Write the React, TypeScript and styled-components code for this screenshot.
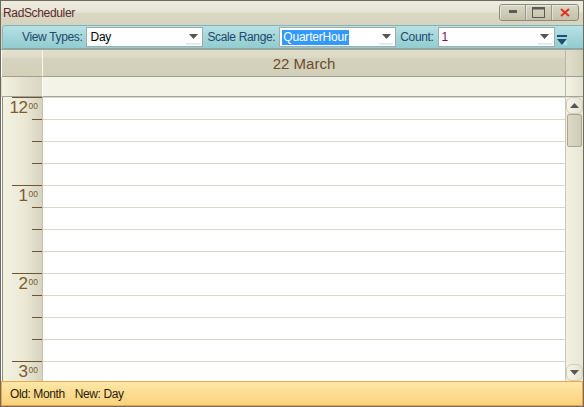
import React from "react";
import styled, { createGlobalStyle } from "styled-components";

const Global = createGlobalStyle`
  html, body { margin: 0; padding: 0; background: #ffffff; }
  body { font-family: "Liberation Sans", Arial, sans-serif; }
  * { box-sizing: border-box; }
`;

const Window = styled.div`
  width: 584px;
  height: 407px;
  border: 1px solid #6d6b60;
  display: flex;
  flex-direction: column;
  background: #d8d5c2;
  overflow: hidden;
`;

const TitleBar = styled.div`
  height: 24px;
  flex: none;
  display: flex;
  align-items: center;
  justify-content: space-between;
  padding: 0 4px 0 2px;
  background: linear-gradient(#eeecdf 0%, #e7e5d5 45%, #dad7c4 52%, #d6d3be 100%);
`;

const Title = styled.span`
  font-size: 12px;
  color: #5b2a2a;
  letter-spacing: -0.35px;
`;

const WinButtons = styled.div`
  display: flex;
  height: 17px;
  margin-top: -2px;
  border: 1px solid #8c8a79;
  border-radius: 3px;
  overflow: hidden;
  background: linear-gradient(#d9d7c5, #c3c0ab);
`;

const WinButton = styled.div<{ $last?: boolean }>`
  width: 26px;
  height: 100%;
  display: flex;
  align-items: center;
  justify-content: center;
  border-right: ${(p) => (p.$last ? "none" : "1px solid #9a988a")};
  box-shadow: inset 1px 1px 0 rgba(255, 255, 255, 0.45);
`;

const Toolbar = styled.div`
  height: 24px;
  flex: none;
  margin: 0 0 0 1px;
  display: flex;
  align-items: center;
  padding: 0 0 0 19px;
  border-top: 1px solid #7fb4b8;
  border-bottom: 1px solid #7fa9ac;
  border-left: 1px solid #86b9bc;
  border-radius: 4px 0 0 0;
  background: linear-gradient(#b8e2e5 0%, #a3d6da 50%, #92ccd0 100%);
`;

const Label = styled.span`
  font-size: 12px;
  color: #1f4a6b;
  margin-right: 4px;
  letter-spacing: -0.35px;
  white-space: nowrap;
`;

const Combo = styled.div<{ $w: number }>`
  width: ${(p) => p.$w}px;
  height: 20px;
  background: #ffffff;
  border: 1px solid #a4a9a9;
  display: flex;
  align-items: center;
  padding-left: 2px;
  margin-right: 4px;
  position: relative;
  font-size: 12px;
  letter-spacing: -0.2px;
  color: #000;
`;

const ComboText = styled.span<{ $sel?: boolean; $color?: string }>`
  background: ${(p) => (p.$sel ? "#3399ff" : "transparent")};
  color: ${(p) => (p.$sel ? "#ffffff" : p.$color || "#000")};
  padding: 0 1px;
  line-height: 15px;
`;

const Arrow = styled.div`
  position: absolute;
  right: 2px;
  top: 1px;
  bottom: 1px;
  width: 14px;
  display: flex;
  align-items: center;
  justify-content: center;
  border-bottom: 2px solid #e3ecec;
`;

const Header = styled.div`
  height: 28px;
  flex: none;
  display: flex;
  background: #ffffff;
  border-top: 1px solid #a5a392;
`;

const Corner = styled.div`
  width: 41px;
  flex: none;
  margin-left: 1px;
  border-right: 1px solid #f7f6ee;
  border-bottom: 1px solid #a09e8c;
  background: linear-gradient(#e3e1cf 0%, #dedbc7 30%, #d6d3be 31%, #d4d1bb 100%);
`;

const DateHead = styled.div`
  flex: 1;
  display: flex;
  align-items: center;
  justify-content: center;
  font-size: 15px;
  color: #6b4c2c;
  padding-top: 1px;
  border-bottom: 1px solid #a09e8c;
  background: linear-gradient(#e0ddca 0%, #dcd9c5 30%, #d5d2bc 31%, #d3d0ba 100%);
`;

const SideCap = styled.div<{ $light?: boolean }>`
  width: 18px;
  flex: none;
  border-left: 1px solid #b8b6a5;
  border-bottom: 1px solid ${(p) => (p.$light ? "#a6a496" : "#a09e8c")};
  background: ${(p) => (p.$light ? "linear-gradient(90deg, #f4f3e6, #e4e2d0)" : "linear-gradient(90deg, #e0ddca, #d3d0ba)")};
`;

const AllDayRow = styled.div`
  height: 20px;
  flex: none;
  display: flex;
`;

const AllDayCorner = styled.div`
  width: 41px;
  flex: none;
  margin-left: 1px;
  border-right: 1px solid #ffffff;
  border-bottom: 1px solid #a6a496;
  background: linear-gradient(90deg, #f2f0df, #d9d6c2);
`;

const AllDayCell = styled.div`
  flex: 1;
  background: #f4f3e7;
  border-bottom: 1px solid #a6a496;
`;

const Body = styled.div`
  flex: 1;
  display: flex;
  min-height: 0;
  overflow: hidden;
  background: #ffffff;
`;

const Ruler = styled.div`
  width: 41px;
  flex: none;
  margin-left: 1px;
  border-left: 1px solid #8f8d7e;
  border-right: 1px solid #c4c1ac;
  background: linear-gradient(90deg, #f3f1e0 0%, #ebe9d6 55%, #d6d3bf 100%);
  overflow: hidden;
`;

const HourSlot = styled.div`
  height: 88px;
  position: relative;
  display: grid;
  grid-template-rows: repeat(4, 22px);
`;

const HourLine = styled.div`
  position: absolute;
  top: 0;
  left: 9px;
  right: 0;
  height: 1px;
  background: #6f5433;
`;

const Tick = styled.div<{ $first?: boolean }>`
  border-top: 1px solid ${(p) => (p.$first ? "transparent" : "#6f5433")};
  margin-left: 29px;
`;

const HourLabel = styled.div`
  position: absolute;
  top: 2px;
  right: 4px;
  display: flex;
  align-items: flex-start;
  color: #7c5a30;
  font-family: "Liberation Sans", Arial, sans-serif;
`;

const HourBig = styled.span`
  font-size: 17px;
  line-height: 17px;
  letter-spacing: -0.5px;
`;

const HourSmall = styled.span`
  font-size: 8.5px;
  line-height: 10px;
  margin-left: 1px;
  margin-top: 2px;
`;

const Cells = styled.div`
  flex: 1;
  overflow: hidden;
`;

const Cell = styled.div`
  height: 22px;
  border-top: 1px solid #d8d7cc;
`;

const Scrollbar = styled.div`
  width: 18px;
  flex: none;
  display: flex;
  flex-direction: column;
  border-left: 1px solid #c9c7b6;
  background: linear-gradient(90deg, #f1f0e2, #e9e7d6);
`;

const ScrollBtn = styled.div`
  height: 17px;
  display: flex;
  align-items: center;
  justify-content: center;
  border: 1px solid #cfcdbb;
  border-radius: 6px;
  background: linear-gradient(90deg, #f6f5ea, #e4e2cf);
`;

const Thumb = styled.div`
  height: 33px;
  margin: 0 1px;
  border: 1px solid #a9a792;
  border-radius: 2px;
  background: linear-gradient(90deg, #dcdac6, #ceccb5);
`;

const Track = styled.div`
  flex: 1;
`;

const StatusBar = styled.div`
  height: 25px;
  flex: none;
  display: flex;
  align-items: center;
  padding-left: 8px;
  border: 1px solid #eea64a;
  background: linear-gradient(#fde7a6, #fbd27e);
  font-size: 12px;
  letter-spacing: -0.4px;
  color: #2a1a0a;
`;

const Gap = styled.span`
  display: inline-block;
  width: 10px;
`;

const DownTri = ({ color = "#555" }: { color?: string }) => (
  <svg width="9" height="5" viewBox="0 0 9 5">
    <path d="M0 0 H9 L4.5 5 Z" fill={color} />
  </svg>
);

const hours = ["12", "1", "2", "3"];

export default function App() {
  const rows = Array.from({ length: 14 });
  return (
    <>
      <Global />
      <Window>
        <TitleBar>
          <Title>RadScheduler</Title>
          <WinButtons>
            <WinButton>
              <svg width="10" height="4" viewBox="0 0 10 4">
                <rect x="1" y="0" width="8" height="3" fill="#5d5b50" />
              </svg>
            </WinButton>
            <WinButton>
              <svg width="13" height="11" viewBox="0 0 13 11">
                <rect x="0.5" y="0.5" width="12" height="10" fill="none" stroke="#5d5b50" />
                <rect x="0.5" y="0.5" width="12" height="2" fill="#5d5b50" />
              </svg>
            </WinButton>
            <WinButton $last>
              <svg width="10" height="9" viewBox="0 0 10 9">
                <path d="M1 1 L9 8 M9 1 L1 8" stroke="#e0321c" strokeWidth="2" />
              </svg>
            </WinButton>
          </WinButtons>
        </TitleBar>
        <Toolbar>
          <Label>View Types:</Label>
          <Combo $w={117}>
            <ComboText>Day</ComboText>
            <Arrow>
              <DownTri />
            </Arrow>
          </Combo>
          <Label>Scale Range:</Label>
          <Combo $w={117}>
            <ComboText $sel>QuarterHour</ComboText>
            <Arrow>
              <DownTri />
            </Arrow>
          </Combo>
          <Label>Count:</Label>
          <Combo $w={117}>
            <ComboText $color="#6a1450">1</ComboText>
            <Arrow>
              <DownTri />
            </Arrow>
          </Combo>
          <svg width="11" height="12" viewBox="0 0 11 12" style={{ marginTop: 8, marginLeft: -2 }}>
            <rect x="0" y="0" width="10" height="2" fill="#1d4e73" />
            <path d="M0 4 H10 L5 10 Z" fill="#1d4e73" />
            <path d="M5 10 L10 4 V10 Z" fill="#cfe9ec" opacity="0.6" />
          </svg>
        </Toolbar>
        <Header>
          <Corner />
          <DateHead>22 March</DateHead>
          <SideCap />
        </Header>
        <AllDayRow>
          <AllDayCorner />
          <AllDayCell />
          <SideCap $light />
        </AllDayRow>
        <Body>
          <Ruler>
            {hours.map((h) => (
              <HourSlot key={h}>
                <HourLine />
                <HourLabel>
                  <HourBig>{h}</HourBig>
                  <HourSmall>00</HourSmall>
                </HourLabel>
                <Tick $first />
                <Tick />
                <Tick />
                <Tick />
              </HourSlot>
            ))}
          </Ruler>
          <Cells>
            {rows.map((_, i) => (
              <Cell key={i} />
            ))}
          </Cells>
          <Scrollbar>
            <ScrollBtn>
              <svg width="9" height="5" viewBox="0 0 9 5">
                <path d="M0 5 H9 L4.5 0 Z" fill="#555" />
              </svg>
            </ScrollBtn>
            <Thumb />
            <Track />
            <ScrollBtn>
              <DownTri />
            </ScrollBtn>
          </Scrollbar>
        </Body>
        <StatusBar>
          Old: Month<Gap />New: Day
        </StatusBar>
      </Window>
    </>
  );
}
